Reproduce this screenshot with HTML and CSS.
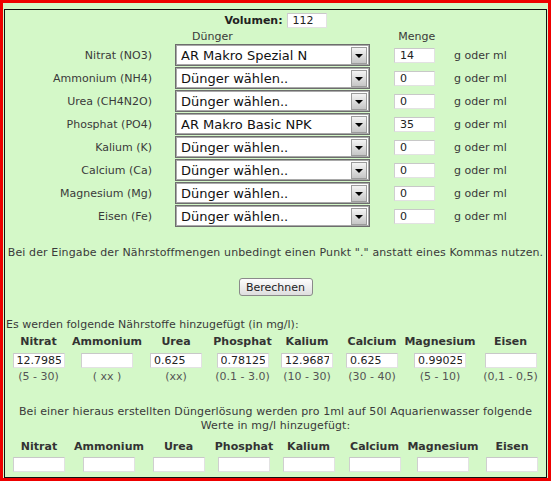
FILE: index.html
```html
<!DOCTYPE html>
<html lang="de">
<head>
    <meta charset="UTF-8">
    <title>Dünger Rechner</title>
    <link rel="stylesheet" href="styles.css">
</head>
<body>
    <div class="frame">
        <div class="panel">
            <!-- Volumen -->
            <div class="volume">
                <strong>Volumen:</strong>
                <input type="text" class="field field-vol" value="112">
            </div>

            <div class="heads">
                <span class="head-duenger">Dünger</span>
                <span class="head-menge">Menge</span>
            </div>

            <!-- Naehrstoffe -->
            <div class="nutrients">
                <label>Nitrat (NO3)</label>
                <div class="select-box"><span>AR Makro Spezial N</span><i class="arrow"></i></div>
                <input type="text" class="field" value="14">
                <span class="unit">g oder ml</span>

                <label>Ammonium (NH4)</label>
                <div class="select-box"><span>Dünger wählen..</span><i class="arrow"></i></div>
                <input type="text" class="field" value="0">
                <span class="unit">g oder ml</span>

                <label>Urea (CH4N2O)</label>
                <div class="select-box"><span>Dünger wählen..</span><i class="arrow"></i></div>
                <input type="text" class="field" value="0">
                <span class="unit">g oder ml</span>

                <label>Phosphat (PO4)</label>
                <div class="select-box"><span>AR Makro Basic NPK</span><i class="arrow"></i></div>
                <input type="text" class="field" value="35">
                <span class="unit">g oder ml</span>

                <label>Kalium (K)</label>
                <div class="select-box"><span>Dünger wählen..</span><i class="arrow"></i></div>
                <input type="text" class="field" value="0">
                <span class="unit">g oder ml</span>

                <label>Calcium (Ca)</label>
                <div class="select-box"><span>Dünger wählen..</span><i class="arrow"></i></div>
                <input type="text" class="field" value="0">
                <span class="unit">g oder ml</span>

                <label>Magnesium (Mg)</label>
                <div class="select-box"><span>Dünger wählen..</span><i class="arrow"></i></div>
                <input type="text" class="field" value="0">
                <span class="unit">g oder ml</span>

                <label>Eisen (Fe)</label>
                <div class="select-box"><span>Dünger wählen..</span><i class="arrow"></i></div>
                <input type="text" class="field" value="0">
                <span class="unit">g oder ml</span>
            </div>

            <p class="note">Bei der Eingabe der Nährstoffmengen unbedingt einen Punkt "." anstatt eines Kommas nutzen.</p>

            <div class="actions">
                <button class="btn">Berechnen</button>
            </div>

            <!-- Ergebnis -->
            <p class="result-title">Es werden folgende Nährstoffe hinzugefügt (in mg/l):</p>
            <div class="results results-top">
                <b>Nitrat</b><b>Ammonium</b><b>Urea</b><b>Phosphat</b><b>Kalium</b><b>Calcium</b><b>Magnesium</b><b>Eisen</b>
                <div><input type="text" class="field field-res" value="12.79855"></div>
                <div><input type="text" class="field field-res" value=""></div>
                <div><input type="text" class="field field-res" value="0.625"></div>
                <div><input type="text" class="field field-res" value="0.78125"></div>
                <div><input type="text" class="field field-res" value="12.96875"></div>
                <div><input type="text" class="field field-res" value="0.625"></div>
                <div><input type="text" class="field field-res" value="0.99025"></div>
                <div><input type="text" class="field field-res" value=""></div>
                <span>(5 - 30)</span><span>( xx )</span><span>(xx)</span><span>(0.1 - 3.0)</span><span>(10 - 30)</span><span>(30 - 40)</span><span>(5 - 10)</span><span>(0,1 - 0,5)</span>
            </div>

            <p class="solution">Bei einer hieraus erstellten Düngerlösung werden pro 1ml auf 50l Aquarienwasser folgende<br>Werte in mg/l hinzugefügt:</p>
            <div class="results results-bottom">
                <b>Nitrat</b><b>Ammonium</b><b>Urea</b><b>Phosphat</b><b>Kalium</b><b>Calcium</b><b>Magnesium</b><b>Eisen</b>
                <div><input type="text" class="field field-res" value=""></div>
                <div><input type="text" class="field field-res" value=""></div>
                <div><input type="text" class="field field-res" value=""></div>
                <div><input type="text" class="field field-res" value=""></div>
                <div><input type="text" class="field field-res" value=""></div>
                <div><input type="text" class="field field-res" value=""></div>
                <div><input type="text" class="field field-res" value=""></div>
                <div><input type="text" class="field field-res" value=""></div>
            </div>
        </div>
    </div>
</body>
</html>
```

FILE: styles.css
```css
body {
    margin: 0;
    font-family: "DejaVu Sans", Verdana, sans-serif;
    font-size: 11px;
    color: #3a3a3a;
}

.frame {
    box-sizing: border-box;
    width: 551px;
    height: 481px;
    border: 3px solid #ee0000;
    background-color: #d4f8c8;
    padding: 6px 1px 0 1px;
    display: flex;
    flex-direction: column;
}

.panel {
    flex: 1;
    border: 1px solid #111;
    overflow: hidden;
}

.field {
    box-sizing: border-box;
    height: 15px;
    margin: 0;
    padding: 0 5px;
    border: 1px solid #e2e2e2;
    border-top-color: #c8c8c8;
    border-left-color: #cfcfcf;
    background: #fff;
    font-family: inherit;
    font-size: 11px;
    color: #222;
    outline: none;
}

/* Volumen */
.volume {
    padding-top: 3px;
    height: 15px;
    display: flex;
    justify-content: center;
    align-items: center;
    gap: 4px;
}

.volume strong {
    color: #222;
}

.field-vol {
    width: 40px;
}

.heads {
    margin-top: 2px;
    height: 14px;
    line-height: 14px;
}

.head-duenger {
    margin-left: 187px;
}

.head-menge {
    margin-left: 162px;
}

/* Naehrstoff-Zeilen */
.nutrients {
    display: grid;
    grid-template-columns: 147px 195px 42px auto;
    column-gap: 23px;
    row-gap: 1px;
    grid-auto-rows: 22px;
    align-items: center;
}

.nutrients label {
    text-align: right;
}

.nutrients .field {
    margin-left: 1px;
}

.unit {
    margin-left: -4px;
}

.select-box {
    box-sizing: border-box;
    height: 22px;
    display: flex;
    align-items: center;
    border: 1px solid #6d6d6d;
    box-shadow: inset 0 0 0 1px #a9a9a9;
    background: #fff;
    padding: 0 2px 0 5px;
    font-size: 13px;
    color: #111;
}

.select-box span {
    flex: 1;
    white-space: nowrap;
    overflow: hidden;
}

.arrow {
    box-sizing: border-box;
    width: 16px;
    height: 17px;
    border: 1px solid #9c9c9c;
    background: linear-gradient(#f4f4f4, #c6c6c6);
    display: flex;
    align-items: center;
    justify-content: center;
}

.arrow::after {
    content: "";
    border-left: 4px solid transparent;
    border-right: 4px solid transparent;
    border-top: 4px solid #000;
    margin-top: 1px;
}

.note {
    margin: 19px 0 0;
    line-height: 14px;
    text-align: center;
    white-space: nowrap;
    letter-spacing: 0.12px;
}

.actions {
    margin-top: 18px;
    text-align: center;
}

.btn {
    box-sizing: border-box;
    width: 74px;
    height: 18px;
    padding: 0;
    border: 1px solid #8a8a8a;
    border-radius: 3px;
    background: linear-gradient(#fdfdfd, #dedede);
    font-family: inherit;
    font-size: 11px;
    color: #222;
}

/* Ergebnisse */
.result-title {
    margin: 22px 0 0 1px;
    line-height: 14px;
}

.results {
    display: grid;
    justify-items: center;
    line-height: 14px;
}

.results b {
    color: #333;
}

.results div {
    padding-top: 4px;
    height: 15px;
}

.results span {
    margin-top: 2px;
    color: #555;
}

.results-top {
    margin-top: 3px;
    grid-template-columns: 67px 70px 68px 65px 64px 66px 70px 71px;
}

.results-bottom {
    margin-top: 7px;
    grid-template-columns: 68px 72px 67px 64px 65px 67px 70px 68px;
}

.results-bottom div {
    padding-top: 3px;
}

.field-res {
    width: 52px;
    padding: 0 3px;
}

.solution {
    margin: 21px 0 0;
    line-height: 14px;
    text-align: center;
    letter-spacing: 0.1px;
}
```
